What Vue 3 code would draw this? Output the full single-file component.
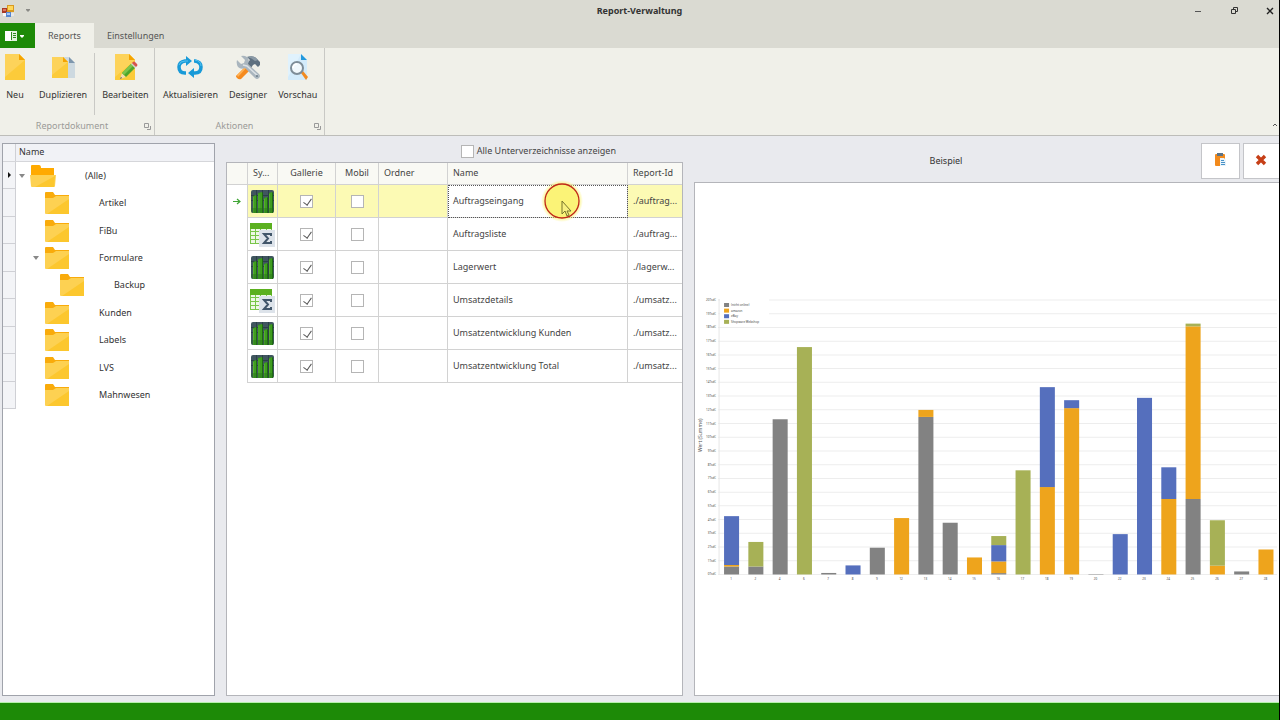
<script setup>
import { ref } from 'vue'

const folders = [
  { name: '(Alle)', level: 0, expandable: true, current: true },
  { name: 'Artikel', level: 1 },
  { name: 'FiBu', level: 1 },
  { name: 'Formulare', level: 1, expandable: true },
  { name: 'Backup', level: 2 },
  { name: 'Kunden', level: 1 },
  { name: 'Labels', level: 1 },
  { name: 'LVS', level: 1 },
  { name: 'Mahnwesen', level: 1 },
]

const reports = ref([
  { name: 'Auftragseingang', id: './auftrag...', kind: 'chart', gallery: true, mobile: false },
  { name: 'Auftragsliste', id: './auftrag...', kind: 'sum', gallery: true, mobile: false },
  { name: 'Lagerwert', id: './lagerw...', kind: 'chart', gallery: true, mobile: false },
  { name: 'Umsatzdetails', id: './umsatz...', kind: 'sum', gallery: true, mobile: false },
  { name: 'Umsatzentwicklung Kunden', id: './umsatz...', kind: 'chart', gallery: true, mobile: false },
  { name: 'Umsatzentwicklung Total', id: './umsatz...', kind: 'chart', gallery: true, mobile: false },
])
const selected = ref(0)
const showSubfolders = ref(false)

const GREY = '#828282'
const ORANGE = '#eea41c'
const BLUE = '#556fbd'
const GREEN = '#a7b156'

const legend = [
  { label: '(nicht online)', color: GREY },
  { label: 'amazon', color: ORANGE },
  { label: 'eBay', color: BLUE },
  { label: 'Shopware Webshop', color: GREEN },
]

// Stacked values per day, in thousands
const days = [
  [1, [GREY, 0.58], [ORANGE, 0.11], [BLUE, 3.56]],
  [2, [GREY, 0.58], [GREEN, 1.79]],
  [4, [GREY, 11.31]],
  [6, [GREEN, 16.57]],
  [7, [GREY, 0.11]],
  [8, [BLUE, 0.66]],
  [9, [GREY, 1.95]],
  [12, [ORANGE, 4.11]],
  [13, [GREY, 11.48], [ORANGE, 0.51]],
  [14, [GREY, 3.77]],
  [15, [ORANGE, 1.24]],
  [16, [GREY, 0.1], [ORANGE, 0.85], [BLUE, 1.19], [GREEN, 0.66]],
  [17, [GREEN, 7.59]],
  [18, [ORANGE, 6.37], [BLUE, 7.28]],
  [19, [ORANGE, 12.12], [BLUE, 0.58]],
  [20, [GREY, 0.03]],
  [22, [BLUE, 2.94]],
  [23, [BLUE, 12.87]],
  [24, [ORANGE, 5.5], [BLUE, 2.31]],
  [25, [GREY, 5.5], [ORANGE, 12.58], [GREEN, 0.2]],
  [26, [ORANGE, 0.64], [GREEN, 3.31]],
  [27, [GREY, 0.22]],
  [28, [ORANGE, 1.82]],
]

const BASE = 279
const UNIT = 13.7
const columns = days.map(([day, ...parts], i) => {
  let top = BASE
  return {
    day,
    x: 36 + i * 24.25,
    parts: parts.map(([color, value]) => {
      const h = value * UNIT
      top -= h
      return { color, y: top, h }
    }),
  }
})
const ticks = Array.from({ length: 21 }, (_, n) => ({ n, y: BASE - n * UNIT }))
</script>

<template>
  <div class="window">
    <header class="titlebar">
      <div class="quick">
        <svg width="12" height="12" viewBox="0 0 12 12">
          <rect x="5" y="0" width="7" height="7" fill="#d99a20" /><rect x="6" y="1" width="5" height="4" fill="#ffd75a" />
          <rect x="0" y="3" width="5" height="5" fill="#a83a26" /><rect x="1" y="4" width="3" height="2" fill="#dc7660" />
          <rect x="1" y="8" width="4" height="3" fill="#f8f8f8" /><rect x="4" y="7" width="5" height="5" fill="#5687d0" />
          <rect x="5" y="8" width="3" height="2" fill="#a9c8f5" /><rect x="9" y="8" width="3" height="3" fill="#e6e8ec" />
        </svg>
        <button class="bare" aria-label="Schnellzugriff">
          <svg width="6" height="4" viewBox="0 0 6 4"><path d="M1 0h4v1L3 3 1 1z" fill="#8a8a86" /></svg>
        </button>
      </div>
      <h1>Report-Verwaltung</h1>
      <div class="controls">
        <button class="bare" aria-label="Minimieren"><svg width="10" height="10" viewBox="0 0 10 10"><path d="M2 5.500h6" stroke="#555" /></svg></button>
        <button class="bare" aria-label="Wiederherstellen"><svg width="10" height="10" viewBox="0 0 10 10" fill="none" stroke="#333"><path d="M2.500 3.500h4v4h-4zM4.500 3V1.500h4v4H7" /></svg></button>
        <button class="bare" aria-label="Schließen"><svg width="10" height="10" viewBox="0 0 10 10"><path d="M2 2l6 6M8 2L2 8" stroke="#222" stroke-width="1.400" /></svg></button>
      </div>
    </header>

    <nav class="tabs">
      <button class="app-menu" aria-label="Datei">
        <svg width="20" height="12" viewBox="0 0 20 12">
          <rect x="0" y="1" width="6" height="10" fill="#fff" /><rect x="6" y="1" width="6" height="10" fill="#e2f2dd" />
          <path d="M8 3.500h3M8 5.500h3M8 7.500h3M6.500 2v8" stroke="#2d8a1c" /><path d="M15 5h4v1l-2 2-2-2z" fill="#fff" />
        </svg>
      </button>
      <button class="tab active">Reports</button>
      <button class="tab">Einstellungen</button>
    </nav>

    <section class="ribbon">
      <div class="group doc">
        <div class="tools">
          <button class="tool">
            <svg width="28" height="28" viewBox="0 0 28 28">
              <path d="M4 1h14l6 6v20H4z" fill="#fccb3a" /><path d="M4 1h14l6 6L4 24z" fill="#fdd35a" /><path d="M18 1l6 6h-6z" fill="#f5a400" />
            </svg>
            <span>Neu</span>
          </button>
          <button class="tool second">
            <svg width="28" height="28" viewBox="0 0 28 28">
              <path d="M16 4h4l6 6v15H14V4z" fill="#cdd9e0" /><path d="M20 4l6 6h-6z" fill="#7e97ad" />
              <path d="M3 4h11l5 5v16H3z" fill="#fccb3a" /><path d="M3 4h11l5 5L3 22z" fill="#fdd35a" /><path d="M14 4l5 5h-5z" fill="#f5a400" />
            </svg>
            <span>Duplizieren</span>
          </button>
          <i class="rule"></i>
          <button class="tool">
            <svg width="28" height="28" viewBox="0 0 28 28">
              <path d="M4 1h14l6 6v20H4z" fill="#fccb3a" /><path d="M4 1h14l6 6L4 24z" fill="#fdd35a" /><path d="M18 1l6 6h-6z" fill="#f5a400" />
              <path d="M9 26l2-6 4 4z" fill="#f3dcae" /><path d="M9 26l1-2 1 1z" fill="#444" />
              <path d="M11 20L20 11l4 4-9 9z" fill="#4fa62c" /><path d="M11 20L20 11l2 2-9 9z" fill="#7cc44b" />
              <path d="M20 11l1-1 4 4-1 1z" fill="#c9d1d6" /><path d="M21 10l1-1q1-1 2 0l2 2q1 1 0 2l-1 1z" fill="#d4524e" />
            </svg>
            <span>Bearbeiten</span>
          </button>
        </div>
        <footer>Reportdokument<svg width="7" height="7" viewBox="0 0 7 7" fill="none" stroke="#999"><path d="M.5.5h4v4h-4z" /><path d="M6.500 3v3.500H3" /></svg></footer>
      </div>
      <div class="group act">
        <div class="tools">
          <button class="tool">
            <svg width="28" height="28" viewBox="0 0 28 28" fill="none" stroke="#189ad8" stroke-width="3.500">
              <path d="M10 20H9Q3 20 3 14q0-5 6-6h2" /><path d="M18 8h1q6 1 6 6 0 6-6 6h-1" />
              <path d="M10 3l6 5-6 5zM18 15l-6 5 6 5z" fill="#189ad8" stroke="none" />
              <path d="M3 12q1-4 6-4h3" stroke="#55c2f0" stroke-width="1" /><path d="M25 13q0-5-6-6" stroke="#55c2f0" stroke-width="1" />
            </svg>
            <span>Aktualisieren</span>
          </button>
          <button class="tool">
            <svg width="28" height="28" viewBox="0 0 28 28">
              <path d="M3 22L14 11l4 4L7 26q-2 1-4-1t0-3z" fill="#f58a1e" /><path d="M3 22L14 11l1 1L4 24z" fill="#ffb052" />
              <path d="M13 10l3-3-3-3q6-2 9 1l4 4v3l-2 2-3-3-2 1-2 3z" fill="#5e7080" /><path d="M13 4q6-2 9 1l2 2-3 1q-3-3-8-4z" fill="#8b9aa6" />
              <path d="M7 3l4 4-1 3-3 1-4-4q-1 4 1 7 3 3 7 1l10 10q2 2 4 0t0-4L14 11q2-5-1-7-3-2-6-1z" fill="#a9b5be" />
              <path d="M9 12l4 1 11 10" fill="none" stroke="#dbe1e5" stroke-width="1.500" /><circle cx="23" cy="23" r="1" fill="#667784" />
            </svg>
            <span>Designer</span>
          </button>
          <button class="tool">
            <svg width="28" height="28" viewBox="0 0 28 28">
              <path d="M4 1h13l6 6v20H4z" fill="#d3ebfb" /><path d="M4 1h13L4 24z" fill="#e0f2fd" /><path d="M17 1l6 6h-6z" fill="#2298dc" />
              <path d="M17 20l2-2 5 6-2 3z" fill="#f28b22" /><circle cx="13" cy="15" r="6" fill="#f1f8fc" stroke="#7e8d98" stroke-width="2" />
              <path d="M9 15q0-4 4-4" fill="none" stroke="#fff" stroke-width="1.500" />
            </svg>
            <span>Vorschau</span>
          </button>
        </div>
        <footer>Aktionen<svg width="7" height="7" viewBox="0 0 7 7" fill="none" stroke="#999"><path d="M.5.5h4v4h-4z" /><path d="M6.500 3v3.500H3" /></svg></footer>
      </div>
      <button class="bare collapse" aria-label="Menüband einklappen"><svg width="6" height="4" viewBox="0 0 6 4"><path d="M1 3l2-2 2 2" fill="none" stroke="#555" /></svg></button>
    </section>

    <main class="body">
      <aside class="tree">
        <div class="tree-head"><span class="gutter"></span><span class="head-name">Name</span></div>
        <ul>
          <li v-for="f in folders" :key="f.name">
            <span class="gutter">
              <svg v-if="f.current" width="3" height="6" viewBox="0 0 3 6"><path d="M0 0l3 3-3 3z" fill="#111" /></svg>
            </span>
            <div :class="['node', 'level-' + f.level]">
              <span class="twist"><svg v-if="f.expandable" width="6" height="4" viewBox="0 0 6 4"><path d="M0 0h6L3 4z" fill="#888" /></svg></span>
              <svg v-if="f.level === 0" class="folder" width="26" height="24" viewBox="0 0 26 24">
                <path d="M1 22V2q0-1 1-1h7q2 0 2 3h13v18z" fill="#ffaa00" /><path d="M0 11h26l-1 11q0 1-1 1H2q-1 0-1-1z" fill="#fdd152" /><path d="M25 12l-1 11H5z" fill="#fcc72e" />
              </svg>
              <svg v-else class="folder" width="26" height="24" viewBox="0 0 26 24">
                <path d="M1 8V2q0-1 1-1h7l2 3h14v4z" fill="#f9ab0b" /><path d="M1 7h8l3-2h13v17q0 1-1 1H2q-1 0-1-1z" fill="#fdd152" /><path d="M25 8v15H3z" fill="#fcc72e" />
              </svg>
              <span class="label">{{ f.name }}</span>
            </div>
          </li>
        </ul>
      </aside>

      <section class="list">
        <label class="sub"><input v-model="showSubfolders" type="checkbox" />Alle Unterverzeichnisse anzeigen</label>
        <div class="grid-panel">
          <table>
            <colgroup><col class="c-mark" /><col class="c-sym" /><col class="c-gal" /><col class="c-mob" /><col class="c-ord" /><col /><col class="c-id" /></colgroup>
            <thead>
              <tr><th></th><th>Sy...</th><th class="mid">Gallerie</th><th class="mid">Mobil</th><th>Ordner</th><th>Name</th><th>Report-Id</th></tr>
            </thead>
            <tbody>
              <tr v-for="(r, i) in reports" :key="r.name" :class="{ selected: i === selected }" @click="selected = i">
                <td class="mark">
                  <svg v-if="i === selected" width="8" height="7" viewBox="0 0 8 7"><path d="M0 3.500h7M4 1l3 2.500L4 6" fill="none" stroke="#3fa535" stroke-width="1.200" /></svg>
                </td>
                <td class="icon">
                  <svg v-if="r.kind === 'chart'" width="26" height="26" viewBox="0 0 26 26">
                    <rect x="2" y="2" width="23" height="23" rx="2" fill="#40565f" />
                    <path d="M2 7.500h23M2 12.500h23M7.500 2v23M13.500 2v23M19.500 2v23" stroke="#2c4048" />
                    <path d="M4 8l3-1v18H4zM9 5l4-1v21H9zM15 10l3-1v16h-3zM20 5l3-1v21h-3z" fill="#3f9c20" />
                    <path d="M7 7l1 1v17H7zM13 4l1 1v20h-1zM18 9l1 1v15h-1zM23 4l1 1v20h-1z" fill="#1d6a10" />
                    <path d="M4.500 9v16M10 6v19M15.500 11v14M20.500 6v19" stroke="#55b02c" />
                    <path d="M2 20h23v3q0 2-2 2H4q-2 0-2-2z" fill="#236e18" opacity=".4" />
                  </svg>
                  <svg v-else width="26" height="26" viewBox="0 0 26 26">
                    <rect x="1" y="3" width="22" height="19" fill="#eef8e6" />
                    <path d="M1 10.500h22M1 14.500h22M1 18.500h22M1 22.500h10M1.500 7v16M6.500 7v16M11.500 7v16M17.500 7v5M22.500 7v5" stroke="#79c64a" />
                    <rect x="1" y="2" width="22" height="6" fill="#5bb01f" />
                    <rect x="10" y="9" width="16" height="17" fill="#dde3ea" />
                    <path d="M22 15v-2h-7l4 4.500-4 4.500h7v-2" fill="none" stroke="#42566a" stroke-width="2" />
                  </svg>
                </td>
                <td class="check"><input v-model="r.gallery" type="checkbox" :aria-label="'Gallerie ' + r.name" /></td>
                <td class="check"><input v-model="r.mobile" type="checkbox" :aria-label="'Mobil ' + r.name" /></td>
                <td></td>
                <td class="name">{{ r.name }}</td>
                <td>{{ r.id }}</td>
              </tr>
            </tbody>
          </table>
          <svg class="pointer" width="44" height="44" viewBox="0 0 44 44">
            <defs><radialGradient id="halo"><stop offset="0.750" stop-color="#fbf36e" /><stop offset="1" stop-color="#fbf36e" stop-opacity="0" /></radialGradient></defs>
            <circle cx="22" cy="22" r="21" fill="url(#halo)" />
            <circle cx="22" cy="22" r="17" fill="#fbf377" stroke="#c0281a" stroke-width="1.300" />
            <path d="M22 22v13l3-3 2 5 2-1-2-4h4z" fill="#f8f080" stroke="#77742c" />
          </svg>
        </div>
      </section>

      <section class="preview">
        <div class="preview-head">
          <h2>Beispiel</h2>
          <button class="sq" aria-label="Einfügen">
            <svg width="12" height="14" viewBox="0 0 12 14">
              <rect x="0" y="1" width="10" height="12" rx="1" fill="#f28a1c" /><rect x="2" y="0" width="6" height="3" fill="#5c7386" />
              <path d="M5 5h4l2 2v6H5z" fill="#eaf4fb" /><path d="M6 7.500h3M6 9.500h4M6 11.500h4" stroke="#4892c7" />
            </svg>
          </button>
          <button class="sq last" aria-label="Entfernen">
            <svg width="12" height="12" viewBox="0 0 12 12"><path d="M2 2l8 8M10 2l-8 8" stroke="#c63f17" stroke-width="3.400" /></svg>
          </button>
        </div>
        <div class="canvas">
          <svg class="chart" viewBox="0 0 583 288" role="img" aria-label="Wert (Summe) pro Tag">
            <line v-for="t in ticks" :key="t.n" x1="23" x2="581" :y1="t.y" :y2="t.y" stroke="#ededed" />
            <line x1="24" x2="24" y1="4" y2="279" stroke="#e6e6e6" />
            <text v-for="t in ticks" :key="'t' + t.n" x="21" :y="t.y + 1" class="tick end">{{ t.n }}Tsd€</text>
            <rect x="25" y="3" width="49" height="27" fill="#fff" />
            <g v-for="(l, i) in legend" :key="l.label">
              <rect x="29" :y="8 + i * 5.600" width="5" height="4" :fill="l.color" />
              <text x="36" :y="11 + i * 5.600" class="tick">{{ l.label }}</text>
            </g>
            <g v-for="c in columns" :key="c.day">
              <rect v-for="p in c.parts" :key="p.y" :x="c.x - 7" :y="p.y" width="15" :height="p.h" :fill="p.color" />
              <text :x="c.x" y="285" class="tick center">{{ c.day }}</text>
            </g>
            <text class="axis" transform="translate(7 140) rotate(-90)">Wert (Summe)</text>
          </svg>
        </div>
      </section>
    </main>
    <footer class="status"></footer>
  </div>
</template>

<style>
html, body, #app { height: 100%; }
body { margin: 0; overflow: hidden; }
</style>

<style scoped>
* { box-sizing: border-box; }
.window {
  min-height: 100vh;
  display: flex;
  flex-direction: column;
  font: 9px/14px "Noto Sans", "Open Sans", sans-serif;
  color: #444;
  background: #e9eaee;
  border-right: 1px solid #000;
}
button { font: inherit; color: inherit; padding: 0; border: 0; background: none; }
svg { display: block; flex: none; }
h1, h2, ul { margin: 0; padding: 0; font-size: inherit; }

.titlebar { display: grid; grid-template-columns: 1fr auto 1fr; align-items: center; height: 23px; padding-bottom: 2px; background: #dadad2; }
.quick { display: flex; align-items: center; gap: 11px; padding-left: 2px; }
.titlebar h1 { font-weight: 700; color: #333; }
.controls { display: flex; justify-content: flex-end; gap: 26px; padding-right: 4px; }

.tabs { display: flex; height: 25px; background: #dadad2; }
.app-menu { width: 35px; padding-left: 5px; background: #1d8a07; }
.tab { padding: 0 13px; color: #555; }
.tab.active { background: #f0f0e9; }

.ribbon { display: flex; height: 88px; background: #f0f0e9; border-bottom: 1px solid #bdbdb9; }
.group { display: flex; flex-direction: column; border-right: 1px solid #c9c9c5; }
.doc { width: 155px; }
.act { width: 170px; }
.tools { display: flex; flex: 1; gap: 4px; padding: 5px 0 0 1px; }
.act .tools { gap: 5px; padding: 5px 5px 0; }
.tool { display: flex; flex-direction: column; align-items: center; gap: 7px; height: 64px; padding: 0 3px; color: #333; white-space: nowrap; }
.tool svg { margin: 0 -3px; }
.second { margin-left: 3px; }
.rule { flex: none; width: 1px; height: 62px; background: #c9c9c5; }
.group footer { position: relative; height: 20px; line-height: 18px; text-align: center; padding-right: 10px; color: #9b9b98; }
.group footer svg { position: absolute; right: 3px; bottom: 5px; }
.collapse { margin-left: auto; align-self: flex-end; padding: 0 1px 8px; }

.body { flex: 1; display: grid; grid-template-columns: 213px minmax(0, 457fr) minmax(0, 585fr); gap: 11px; padding: 7px 0 6px 2px; }
.tree { background: #fff; border: 1px solid #a0a3ab; }
.tree-head { display: flex; height: 18px; background: #f1f2f6; border-bottom: 1px solid #d5d6da; color: #333; }
.head-name { padding-left: 3px; line-height: 16px; }
.tree ul { list-style: none; display: grid; grid-template-rows: repeat(9, 1fr); height: 247px; }
.tree li { display: flex; }
.gutter { display: flex; align-items: center; justify-content: center; flex: none; width: 13px; background: #f3f4f7; border-right: 1px solid #cfd0d5; }
li .gutter { border-bottom: 1px solid #cfd0d5; }
.node { display: flex; align-items: center; padding-left: 3px; color: #333; }
.level-1 { padding-left: 17px; }
.level-2 { padding-left: 32px; }
.twist { width: 11px; }
.label { padding-left: 29px; }

.list { display: flex; flex-direction: column; }
.sub { display: flex; align-items: center; justify-content: flex-end; gap: 3px; height: 16px; margin-bottom: 3px; padding-right: 67px; }
input[type="checkbox"] { appearance: none; display: block; width: 13px; height: 13px; margin: 0; border: 1px solid #b5b5b5; background: #fff; }
input[type="checkbox"]:checked::after { content: ""; display: block; width: 4px; height: 7px; margin: 1px 0 0 4px; border: solid #555; border-width: 0 1px 1px 0; transform: rotate(35deg); }
.grid-panel { position: relative; flex: 1; background: #fff; border: 1px solid #b4b5ba; }
table { width: 100%; table-layout: fixed; border-collapse: separate; border-spacing: 0; }
.c-mark { width: 21px; }
.c-sym { width: 30px; }
.c-gal { width: 58px; }
.c-mob { width: 43px; }
.c-ord { width: 69px; }
.c-id { width: 54px; }
th { height: 22px; padding: 0 0 1px 5px; font-weight: 400; text-align: left; background: #f9f9f4; border-right: 1px solid #d2d2d2; border-bottom: 1px solid #d2d2d2; white-space: nowrap; }
th.mid { text-align: center; padding: 0 0 1px; }
td { height: 33px; padding: 0 4px 0 5px; border-right: 1px solid #d2d2d2; border-bottom: 1px solid #d2d2d2; white-space: nowrap; }
th:last-child, td:last-child { border-right: 0; }
td.mark { padding: 0 0 0 6px; border-bottom: 0; }
td.icon { padding: 0 0 0 1px; }
td.check { padding: 0; }
td.check input { margin: 0 auto; }
.selected td { background: #fcfab4; }
.selected td.mark { background: #fff; }
.selected td.name { background: #fff; outline: 1px dotted #555; outline-offset: -1px; }
.pointer { position: absolute; left: 313px; top: 16px; }

.preview { display: flex; flex-direction: column; }
.preview-head { display: flex; gap: 3px; height: 36px; margin-bottom: 3px; }
.preview-head h2 { flex: 1; text-align: center; font-weight: 400; line-height: 35px; color: #333; }
.sq { display: flex; align-items: center; justify-content: center; width: 39px; padding-bottom: 2px; background: #fff; border: 1px solid #c4c5c9; }
.sq.last { width: 36px; padding-right: 2px; border-right: 0; }
.canvas { flex: 1; display: flex; align-items: center; background: #fff; border: 1px solid #b4b5ba; border-right: 0; }
.chart { width: 100%; flex: 1; }
.tick { font-size: 3px; fill: #444; }
.end { text-anchor: end; }
.center { text-anchor: middle; }
.axis { font-size: 5px; fill: #555; text-anchor: middle; }

.status { height: 18px; background: #1d8a07; border-top: 1px solid #b6efac; }
</style>
